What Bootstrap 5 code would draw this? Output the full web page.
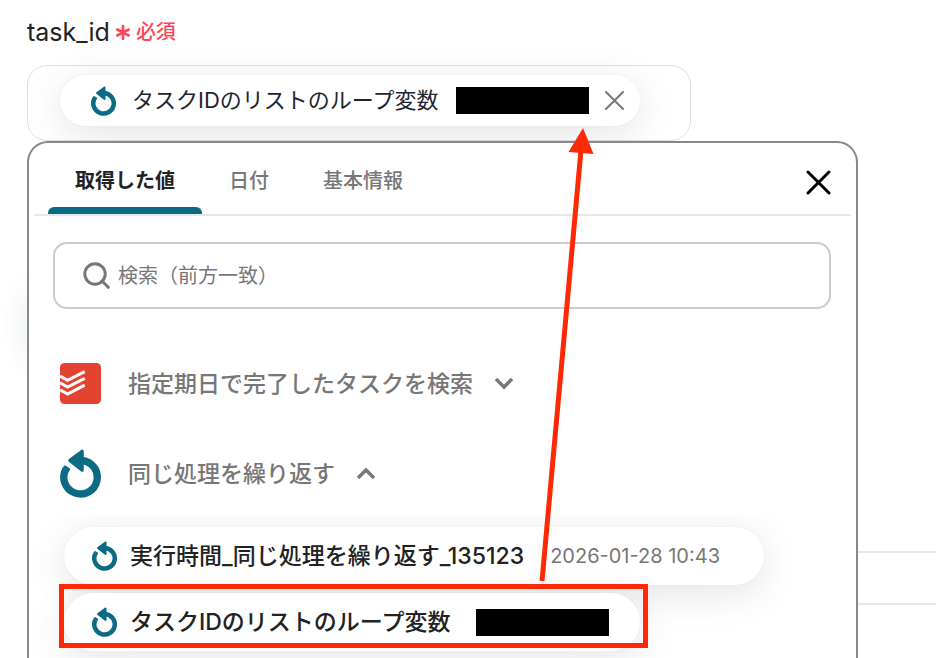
<!DOCTYPE html>
<html lang="ja">
<head>
<meta charset="utf-8">
<meta name="viewport" content="width=device-width, initial-scale=1">
<title>task_id</title>
<link href="https://cdn.jsdelivr.net/npm/bootstrap@5.3.0/dist/css/bootstrap.min.css" rel="stylesheet">
<style>
  body { font-family: Inter, "Noto Sans CJK JP", sans-serif; color: #222; background: #fff; }
  .page { padding: 16px 0 0 27px; background: radial-gradient(ellipse 26px 56px at 28px 325px, #f3f6f6, #fff) no-repeat; }
  .field-label { font-size: 25px; line-height: 32px; gap: 5px; }
  .required { color: #ff4556; font-size: 20px; font-weight: 500; gap: 5px; }
  .value-field { max-width: 664px; margin-top: 17px; padding: 9px 50px 14px 32px; border: 1px solid #dcdfe6; border-radius: 20px; }
  .pill { background: #fff; border-radius: 32px; box-shadow: 0 8px 40px rgba(0, 0, 0, .11), 0 0 2px rgba(0, 0, 0, .06); }
  .pill-selected { height: 51px; padding: 0 16px 0 31px; font-size: 22px; color: #1f2430; }
  .redacted { width: 133px; height: 27px; background: #000; }
  .teal-icon { fill: none; stroke: #0b6b85; flex: none; }
  .icon-button { background: none; border: 0; padding: 0; line-height: 0; }
  .picker { flex: 0 1 831px; min-width: 0; border: 2px solid #888; border-bottom: 0; border-radius: 21px 21px 0 0; background: #fff; }
  .picker-head { margin: 0 5px; padding: 0 20px 0 14px; border-bottom: 2px solid #e8e8e8; }
  .tab-button { height: 71px; border: 0; background: none; padding: 0 27px; font-size: 20px; font-weight: 500; line-height: 76px; color: #777; position: relative; }
  .tab-button.active { color: #222; font-weight: 600; }
  .tab-button.active::after { content: ""; position: absolute; left: 0; right: 0; bottom: 0; height: 7px; border-radius: 6px 6px 0 0; background: #0b6b85; }
  .search-box { margin: 26px 25px 0 24px; height: 67px; padding: 0 26px 0 28px; border: 2px solid #ccc; border-radius: 14px; color: #777; }
  .search-input { border: 0; outline: 0; background: none; font-size: 20px; padding: 0; color: #222; }
  .search-input::placeholder { color: #777; opacity: 1; }
  .group-row { padding-left: 31px; }
  .group-button { border: 0; background: none; padding: 0; gap: 27px; color: #777; font-size: 23px; font-weight: 500; line-height: 40px; }
  .group-icon { width: 41px; flex: none; }
  .group-name { margin-right: -6px; }
  .group-first { margin-top: 54px; }
  .group-second { margin-top: 45px; }
  .choices { margin-top: 17px; padding: 12px 0 20px 35px; overflow: hidden; gap: 8px; }
  .pill-choice { border: 0; height: 58px; padding: 0 31px 0 28px; gap: 13px; font-size: 23px; font-weight: 500; color: #222; }
  .pill-dated { padding-right: 44px; }
  .stamp { font-size: 20px; font-weight: 400; color: #777; margin-left: 13px; }
  .choice-value { margin-left: 12px; }
  .frame { position: absolute; left: -5px; right: -8px; top: -9px; bottom: 3px; border: 5px solid #ff2a05; }
  .backdrop { padding-top: 410px; }
  .backdrop-row { height: 52px; border-top: 2px solid #e8e8e8; }
  .pointer { position: absolute; left: 530px; top: 120px; pointer-events: none; }
</style>
<script src="https://cdn.jsdelivr.net/npm/bootstrap@5.3.0/dist/js/bootstrap.bundle.min.js"></script>
</head>
<body>
<svg class="d-none" aria-hidden="true">
  <symbol id="loop" viewBox="10 4 40 48">
    <path d="M15.7 23.7A16.4 16.4 0 1 0 31 15.3" stroke-width="7.2"/>
    <path d="M18.2 24L14.8 21.9" stroke-width="3.4" stroke-linecap="round"/>
    <path d="M19.6 15.2L31.6 6.3L31.6 24.8Z" stroke-width="3.2" stroke-linejoin="round" fill="#0b6b85"/>
  </symbol>
</svg>
<main class="page position-relative min-vh-100 vh-100 overflow-hidden d-flex flex-column">
  <div class="field-label d-flex align-items-center">
    <span>task_id</span>
    <span class="required d-flex align-items-center">
      <svg width="16" height="16" viewBox="0 0 16 16" stroke="#ff4556" stroke-width="2.6" stroke-linecap="round" aria-hidden="true"><path d="M8 2v13M2.200 5.500l11.600 6M2.200 11.500l11.600-6"/></svg>必須
    </span>
  </div>

  <div class="value-field flex-shrink-0">
    <div class="pill pill-selected d-flex align-items-center">
      <svg class="teal-icon" width="25" height="30"><use href="#loop"/></svg>
      <span class="text-nowrap ms-3">タスクIDのリストのループ変数</span>
      <span class="redacted ms-auto"></span>
      <button class="icon-button ms-3" type="button" aria-label="削除">
        <svg width="19" height="19" viewBox="0 0 19 19" stroke="#777" stroke-width="2" stroke-linecap="round"><path d="M1 1l17 17M18 1L1 18"/></svg>
      </button>
    </div>
  </div>

  <div class="position-relative d-flex flex-grow-1">
    <section class="picker">
      <div class="picker-head d-flex align-items-center">
        <div class="d-flex" role="tablist">
          <button class="tab-button active" type="button" role="tab" aria-selected="true">取得した値</button>
          <button class="tab-button" type="button" role="tab" aria-selected="false">日付</button>
          <button class="tab-button" type="button" role="tab" aria-selected="false">基本情報</button>
        </div>
        <button class="icon-button ms-auto pt-2" type="button" aria-label="閉じる">
          <svg width="25" height="25" viewBox="0 0 25 25" stroke="#000" stroke-width="3" stroke-linecap="round"><path d="M2 2l21 21M23 2L2 23"/></svg>
        </button>
      </div>

      <label class="search-box d-flex align-items-center">
        <svg class="flex-shrink-0" width="27" height="27" viewBox="0 0 27 27" fill="none" stroke="#777" stroke-width="3" aria-hidden="true"><circle cx="12" cy="12" r="10.2"/><path d="M19 19l6.3 6.3" stroke-linecap="round"/></svg>
        <input class="search-input flex-grow-1 ms-2" type="search" placeholder="検索（前方一致）" aria-label="検索（前方一致）">
      </label>

      <div class="group-row group-first d-flex">
        <button class="group-button d-flex align-items-center" type="button" aria-expanded="false">
          <svg class="group-icon" height="41" viewBox="0 0 41 41" aria-hidden="true">
            <rect width="41" height="41" rx="4.5" fill="#e44332"/>
            <g fill="none" stroke="#fff" stroke-width="3"><path d="M0 13L7.500 17.400L24.700 8.700"/><path d="M0 19.700L7.500 24.100L24.700 15.400"/><path d="M0 26.700L7.500 31.100L24.700 22.200"/></g>
          </svg>
          <span class="group-name">指定期日で完了したタスクを検索</span>
          <svg width="20" height="13" viewBox="0 0 20 13" fill="none" stroke="#777" stroke-width="3.4" aria-hidden="true"><path d="M2 2l8 8l8-8"/></svg>
        </button>
      </div>

      <div class="group-row group-second d-flex">
        <button class="group-button d-flex align-items-center" type="button" aria-expanded="true">
          <svg class="teal-icon group-icon" height="49"><use href="#loop"/></svg>
          <span class="group-name">同じ処理を繰り返す</span>
          <svg width="20" height="13" viewBox="0 0 20 13" fill="none" stroke="#777" stroke-width="3.4" aria-hidden="true"><path d="M2 11l8-8l8 8"/></svg>
        </button>
      </div>

      <div class="choices d-flex flex-column align-items-start">
        <button class="pill pill-choice pill-dated d-flex align-items-center text-nowrap" type="button">
          <svg class="teal-icon" width="25" height="30"><use href="#loop"/></svg>
          <span>実行時間_同じ処理を繰り返す_135123</span>
          <span class="stamp">2026-01-28 10:43</span>
        </button>
        <button class="pill pill-choice position-relative d-flex align-items-center text-nowrap" type="button">
          <svg class="teal-icon" width="25" height="30"><use href="#loop"/></svg>
          <span>タスクIDのリストのループ変数</span>
          <span class="redacted choice-value"></span>
          <span class="frame"></span>
        </button>
      </div>
    </section>
    <div class="backdrop flex-grow-1" aria-hidden="true">
      <div class="backdrop-row"></div>
      <div class="backdrop-row"></div>
    </div>
  </div>

  <svg class="pointer" width="80" height="470" viewBox="530 120 80 470" aria-hidden="true">
    <path d="M542 581L581 150" stroke="#ff2a05" stroke-width="5"/>
    <path d="M583 128L568.500 152L593.500 154Z" fill="#ff2a05"/>
  </svg>
</main>
</body>
</html>
